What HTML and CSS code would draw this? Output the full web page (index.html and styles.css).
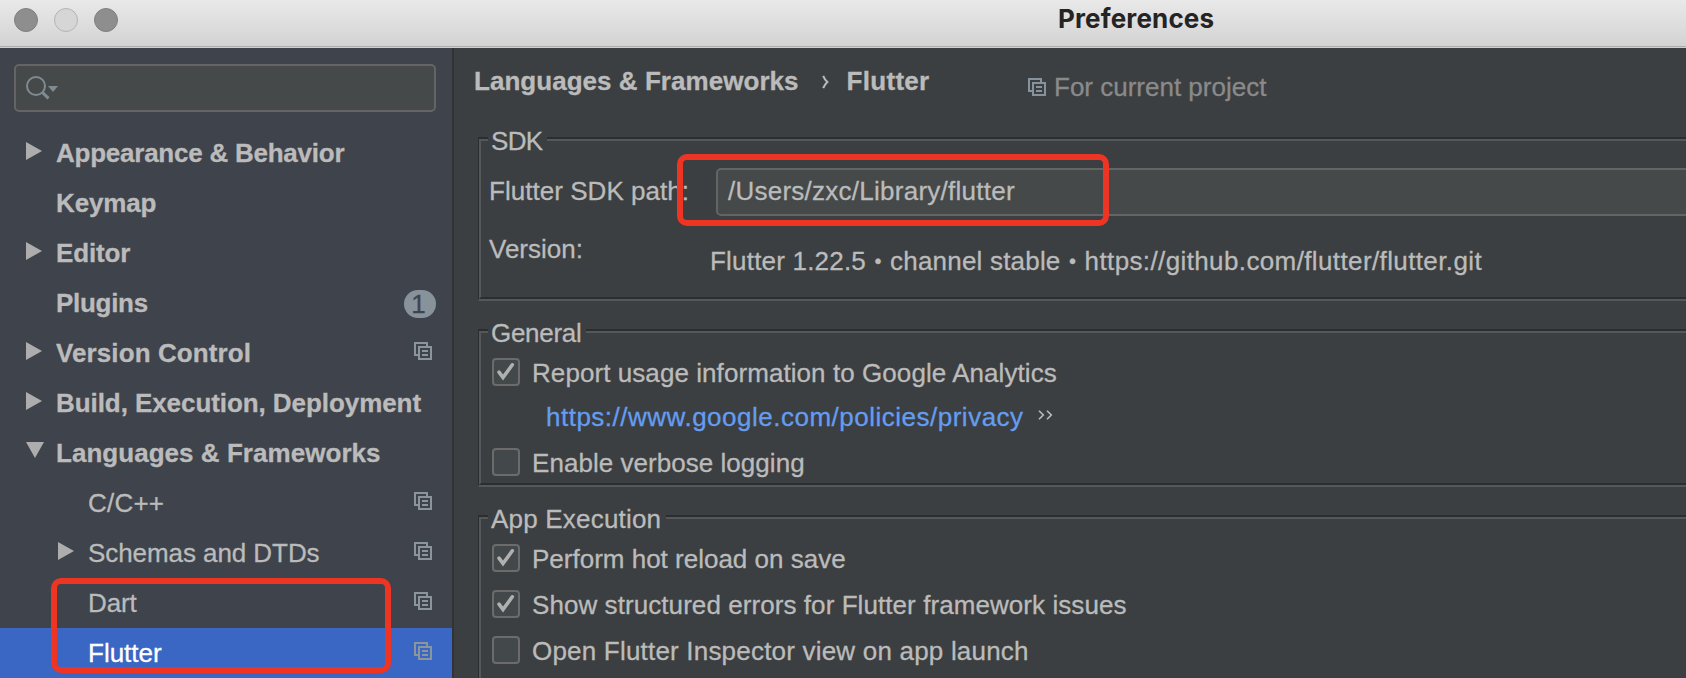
FILE: index.html
```html
<!DOCTYPE html>
<html lang="en">
<head>
<meta charset="utf-8">
<title>Preferences</title>
<link rel="stylesheet" href="styles.css">
</head>
<body>
<svg class="defs" width="0" height="0" aria-hidden="true">
  <symbol id="project" viewBox="0 0 18 18">
    <path d="M4 13H1V1h12v3M5 5h12v12H5zM8 9h6M8 13h6" fill="none" stroke="currentColor" stroke-width="2"/>
  </symbol>
  <symbol id="closed" viewBox="0 0 18 18"><path d="M0 0l16 9-16 9z" fill="currentColor"/></symbol>
  <symbol id="open" viewBox="0 0 18 18"><path d="M0 0h18L9 16z" fill="currentColor"/></symbol>
  <symbol id="check" viewBox="0 0 28 28">
    <path d="M7 14.2l4 5.3L20.3 6.8" fill="none" stroke="currentColor" stroke-width="3.6" stroke-linecap="round"/>
  </symbol>
</svg>
<div class="window">
  <header class="titlebar">
    <div class="lights"><i class="light"></i><i class="light off"></i><i class="light"></i></div>
    <h1 class="title">Preferences</h1>
  </header>
  <div class="body">
    <aside class="sidebar">
      <div class="search">
        <svg width="30" height="26" viewBox="0 0 30 26"><circle cx="10" cy="10" r="9" fill="none" stroke="#7f8b91" stroke-width="2"/><path d="M16.3 16.3l6.2 6" stroke="#7f8b91" stroke-width="3"/><path d="M22 10h10l-5 6z" fill="#7f8b91"/></svg>
      </div>
      <ul class="tree">
        <li class="node top"><svg class="arrow"><use href="#closed"/></svg><span class="ls-m24">Appearance &amp; Behavior</span></li>
        <li class="node top"><i class="arrow"></i><span class="ls-m15">Keymap</span></li>
        <li class="node top"><svg class="arrow"><use href="#closed"/></svg><span class="ls-m15">Editor</span></li>
        <li class="node top"><i class="arrow"></i><span class="ls-m30">Plugins</span><b class="badge">1</b></li>
        <li class="node top"><svg class="arrow"><use href="#closed"/></svg><span class="ls-p10">Version Control</span><svg class="scope"><use href="#project"/></svg></li>
        <li class="node top"><svg class="arrow"><use href="#closed"/></svg><span class="ls-m07">Build, Execution, Deployment</span></li>
        <li class="node top"><svg class="arrow"><use href="#open"/></svg><span class="ls-p04">Languages &amp; Frameworks</span></li>
        <li class="node sub"><i class="arrow"></i><span class="ls-p20">C/C++</span><svg class="scope"><use href="#project"/></svg></li>
        <li class="node sub"><svg class="arrow"><use href="#closed"/></svg><span class="ls-m07">Schemas and DTDs</span><svg class="scope"><use href="#project"/></svg></li>
        <li class="node sub"><i class="arrow"></i><span class="ls-m15">Dart</span><svg class="scope"><use href="#project"/></svg></li>
        <li class="node sub selected"><i class="arrow"></i><span>Flutter</span><svg class="scope"><use href="#project"/></svg></li>
      </ul>
      <div class="mark mark-tree"></div>
    </aside>
    <main class="main">
      <div class="heading">
        <div class="crumbs">
          <span class="ls-p04">Languages &amp; Frameworks</span>
          <svg class="sep" width="8" height="14" viewBox="0 0 8 14"><path d="M1.2 .8Q2.6 4.5 5.4 7 2.6 9.500 1.200 13.200" fill="none" stroke="currentColor" stroke-width="2"/></svg>
          <span class="ls-p30">Flutter</span>
        </div>
        <div class="project"><svg class="icon"><use href="#project"/></svg><span>For current project</span></div>
      </div>
      <section class="group sdk">
        <h2 class="legend ls-m70">SDK</h2>
        <div class="inner">
          <div class="row path"><label class="label ls-p04">Flutter SDK path:</label><div class="field ls-p24">/Users/zxc/Library/flutter</div></div>
          <div class="row version"><span class="label">Version:</span><span class="value ls-p20">Flutter 1.22.5 <i class="dot">•</i> channel stable <i class="dot">•</i> <span class="ls-p38">https://github.com/flutter/flutter.git</span></span></div>
        </div>
        <div class="mark mark-path"></div>
      </section>
      <section class="group general">
        <h2 class="legend ls-m30">General</h2>
        <div class="inner options">
          <div class="option"><span class="box"><svg><use href="#check"/></svg></span><span class="ls-p07">Report usage information to Google Analytics</span></div>
          <div class="link"><a class="ls-p50">https://www.google.com/policies/privacy</a><svg width="15" height="10" viewBox="0 0 15 10"><path d="M1 .7L5.300 5 1 9.300M9 .7L13.300 5 9 9.300" fill="none" stroke="#bbb" stroke-width="1.600"/></svg></div>
          <div class="option"><span class="box"></span><span class="ls-p04">Enable verbose logging</span></div>
        </div>
      </section>
      <section class="group execution">
        <h2 class="legend ls-p20">App Execution</h2>
        <div class="inner options">
          <div class="option"><span class="box"><svg><use href="#check"/></svg></span><span>Perform hot reload on save</span></div>
          <div class="option"><span class="box"><svg><use href="#check"/></svg></span><span class="ls-p07">Show structured errors for Flutter framework issues</span></div>
          <div class="option"><span class="box"></span><span class="ls-p20">Open Flutter Inspector view on app launch</span></div>
        </div>
      </section>
    </main>
  </div>
</div>
</body>
</html>
```
FILE: styles.css
```css
* { box-sizing: border-box; }
body {
  margin: 0;
  background: #3c3f41;
  color: #bbb;
  font: 26px/30px "Liberation Sans", Arial, sans-serif;
  white-space: nowrap;
  -webkit-text-stroke: .3px;
}
svg { display: block; flex: none; }
.defs { position: absolute; }
.window { height: 678px; overflow: hidden; display: flex; flex-direction: column; }

/* tracking steps, hundredths of a pixel */
.ls-m70 { letter-spacing: -.7px; }
.ls-m30 { letter-spacing: -.3px; }
.ls-m24 { letter-spacing: -.24px; }
.ls-m15 { letter-spacing: -.15px; }
.ls-m07 { letter-spacing: -.07px; }
.ls-p04 { letter-spacing: .04px; }
.ls-p07 { letter-spacing: .07px; }
.ls-p10 { letter-spacing: .1px; }
.ls-p20 { letter-spacing: .2px; }
.ls-p24 { letter-spacing: .25px; }
.ls-p30 { letter-spacing: .3px; }
.ls-p38 { letter-spacing: .38px; }
.ls-p50 { letter-spacing: .5px; }

/* title bar */
.titlebar {
  flex: none;
  height: 48px;
  display: flex;
  background: linear-gradient(#e9e9e9, #d3d3d3 46px);
  border-bottom: 1px solid #cfd1d1;
  box-shadow: inset 0 -1px #acacac;
}
.lights { display: flex; gap: 16px; padding: 8px 0 0 14px; width: 1058px; }
.light { width: 24px; height: 24px; border-radius: 50%; background: #8e8e8e; border: 1px solid #808080; }
.light.off { background: #d6d6d6; border-color: #b4b4b4; }
.title { margin: 3px 0 0; color: #242424; font: bold 26px/32px Inter, sans-serif; letter-spacing: .15px; -webkit-text-stroke: 0; }

.body { flex: 1; display: flex; min-height: 0; }

/* category tree */
.sidebar { position: relative; width: 454px; flex: none; background: #3f434c; border-right: 2px solid #323334; padding-top: 16px; }
.search { height: 48px; margin: 0 16px 0 14px; padding: 10px; border: 2px solid #646464; border-radius: 5px; background: #45494a; }
.search svg { overflow: visible; }
.tree { list-style: none; margin: 16px 0 0; padding: 0; }
.node { display: flex; height: 50px; line-height: 50px; padding-right: 20px; }
.top { font-weight: bold; padding-left: 26px; }
.sub { padding-left: 58px; }
.arrow { width: 18px; height: 18px; margin: 14px 12px 0 0; color: #adadad; flex: none; }
.scope { width: 18px; height: 18px; margin: 14px 0 0 auto; color: #8a959c; }
.badge { width: 32px; height: 28px; margin: 12px -4px 0 auto; padding-right: 3px; border-radius: 14px; background: #87929a; color: #3f434c; font-weight: normal; line-height: 28px; text-align: center; }
.selected { background: #3a66c4; color: #fff; }

/* callouts drawn over the window */
.mark { position: absolute; border: 6px solid #ee3524; border-radius: 10px; }
.mark-tree { left: 51px; top: 530px; width: 340px; height: 95px; }
.mark-path { left: 198px; top: 15px; width: 432px; height: 72px; }

/* settings page */
.main { flex: 1; min-width: 0; padding-left: 24px; overflow: hidden; }
.heading { height: 89px; display: flex; }
.crumbs { display: flex; padding: 18px 0 0 0; margin-left: -4px; width: 554px; font-weight: bold; }
.sep { margin: 9px 17px 0 23px; }
.project { display: flex; gap: 8px; padding-top: 24px; color: #8a8a8a; }
.icon { width: 18px; height: 18px; margin-top: 6px; color: #87929a; }

.group { position: relative; margin-bottom: 28px; margin-right: -20px; border: 2px solid #2b2d2e; border-left-width: 1px; border-bottom: 2px solid #55585a; }
.inner { height: 100%; border: 2px solid #55585a; border-bottom-color: #2b2d2e; padding-left: 11px; }
.sdk { height: 164px; }
.general { height: 158px; }
.execution { height: 200px; }
.legend { position: absolute; left: 9px; top: -13px; margin: 0; padding: 0 5px 0 3px; background: #3c3f41; font: inherit; }
.row { display: flex; }
.label { width: 227px; margin-left: -3px; flex: none; }
.path { padding-top: 27px; line-height: 46px; }
.field { flex: 1; height: 48px; padding-left: 10px; border: 2px solid #646464; border-radius: 5px; background: #45494a; line-height: 42px; }
.version .label { margin-top: 18px; width: 221px; }
.version .value { margin-top: 30px; }
.dot { font-style: normal; font-size: 20px; padding: 0 1px; vertical-align: 2px; line-height: 1; }
.options { padding-top: 25px; display: flex; flex-direction: column; gap: 16px; }
.option { display: flex; gap: 12px; }
.box { width: 28px; height: 28px; border: 2px solid #6b6b6b; border-radius: 4px; background: #43494a; }
.box svg { width: 28px; height: 28px; margin: -2px; color: #b0b0b0; }
.link { display: flex; gap: 14px; margin-top: -2px; padding-left: 54px; color: #649df0; }
.link svg { margin-top: 8px; }
```
